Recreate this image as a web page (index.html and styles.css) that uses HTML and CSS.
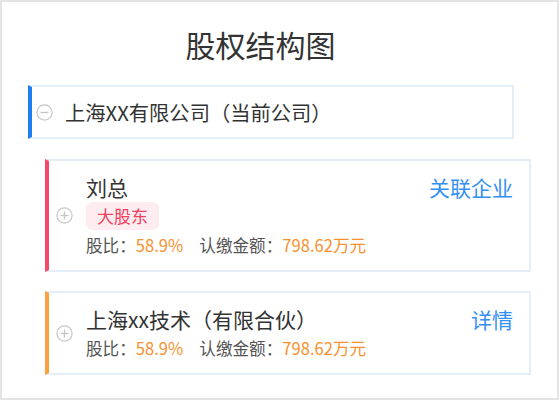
FILE: index.html
```html
<!DOCTYPE html>
<html lang="zh-CN">
<head>
    <meta charset="UTF-8">
    <title>股权结构图</title>
    <link rel="stylesheet" href="styles.css">
</head>
<body>
<div class="page">
    <h1 class="title">股权结构图</h1>

    <div class="tree">
        <div class="root">
            <svg class="toggle" width="17" height="17" viewBox="0 0 17 17">
                <circle cx="8.5" cy="8.5" r="7.6" fill="none" stroke="#c6c6c6" stroke-width="1.2"/>
                <line x1="4.5" y1="8.5" x2="12.5" y2="8.5" stroke="#c6c6c6" stroke-width="1.4"/>
            </svg>
            <span class="root-name">上海XX有限公司（当前公司）</span>
        </div>

        <div class="card card-red">
            <svg class="toggle" width="17" height="17" viewBox="0 0 17 17">
                <circle cx="8.5" cy="8.5" r="7.6" fill="none" stroke="#c6c6c6" stroke-width="1.2"/>
                <line x1="4.5" y1="8.5" x2="12.5" y2="8.5" stroke="#c6c6c6" stroke-width="1.4"/>
                <line x1="8.5" y1="4.5" x2="8.5" y2="12.5" stroke="#c6c6c6" stroke-width="1.4"/>
            </svg>
            <div class="card-body">
                <div class="name">刘总</div>
                <span class="tag">大股东</span>
                <div class="stats">
                    <span>股比：<em>58.9%</em></span>
                    <span>认缴金额：<em>798.62万元</em></span>
                </div>
            </div>
            <a class="link" href="#">关联企业</a>
        </div>

        <div class="card card-orange">
            <svg class="toggle" width="17" height="17" viewBox="0 0 17 17">
                <circle cx="8.5" cy="8.5" r="7.6" fill="none" stroke="#c6c6c6" stroke-width="1.2"/>
                <line x1="4.5" y1="8.5" x2="12.5" y2="8.5" stroke="#c6c6c6" stroke-width="1.4"/>
                <line x1="8.5" y1="4.5" x2="8.5" y2="12.5" stroke="#c6c6c6" stroke-width="1.4"/>
            </svg>
            <div class="card-body">
                <div class="name">上海xx技术（有限合伙）</div>
                <div class="stats">
                    <span>股比：<em>58.9%</em></span>
                    <span>认缴金额：<em>798.62万元</em></span>
                </div>
            </div>
            <a class="link" href="#">详情</a>
        </div>
    </div>
</div>
</body>
</html>
```

FILE: styles.css
```css
body {
    margin: 0;
    font-family: "Noto Sans CJK SC", "Noto Sans", sans-serif;
    color: #333;
    background: #fff;
}

.page {
    width: 559px;
    height: 400px;
    box-sizing: border-box;
    border: 2px solid #e4e4e4;
    overflow: hidden;
}

.title {
    margin: 22px 0 0;
    padding-right: 38px;
    text-align: center;
    font-size: 30px;
    line-height: 40px;
    font-weight: 400;
    color: #333;
}

.tree {
    display: flex;
    flex-direction: column;
    padding-left: 26px;
    margin-top: 21px;
}

.root {
    width: 486px;
    height: 54px;
    box-sizing: border-box;
    display: flex;
    align-items: center;
    border: 2px solid #e4eef8;
    border-left: 4px solid #1f7ef0;
    padding-left: 4px;
    margin-bottom: 20px;
}

.root-name {
    margin-left: 12px;
    font-size: 20.3px;
    line-height: 28px;
}

.toggle {
    flex: none;
    display: block;
}

.card {
    width: 486px;
    box-sizing: border-box;
    margin-left: 17px;
    margin-bottom: 19px;
    display: flex;
    align-items: center;
    border: 2px solid #e4eef8;
    padding: 12px 16px 12px 7px;
}

.card-red { border-left: 4px solid #f5486b; }
.card-orange { border-left: 4px solid #ffa03e; }

.card-body {
    flex: 1;
    margin-left: 13px;
}

.name {
    font-size: 21px;
    line-height: 28px;
}

.tag {
    display: inline-block;
    margin-top: 1px;
    padding: 0 11px;
    height: 28px;
    line-height: 28px;
    font-size: 17px;
    color: #f0405f;
    background: #fdedf0;
    border-radius: 6px;
}

.stats {
    margin-top: 2px;
    font-size: 16.6px;
    line-height: 26px;
    color: #555;
    display: flex;
    gap: 16px;
}

.stats em {
    font-style: normal;
    color: #f7912d;
}

.link {
    align-self: flex-start;
    font-size: 21px;
    line-height: 28px;
    color: #3590f3;
    text-decoration: none;
}
```
